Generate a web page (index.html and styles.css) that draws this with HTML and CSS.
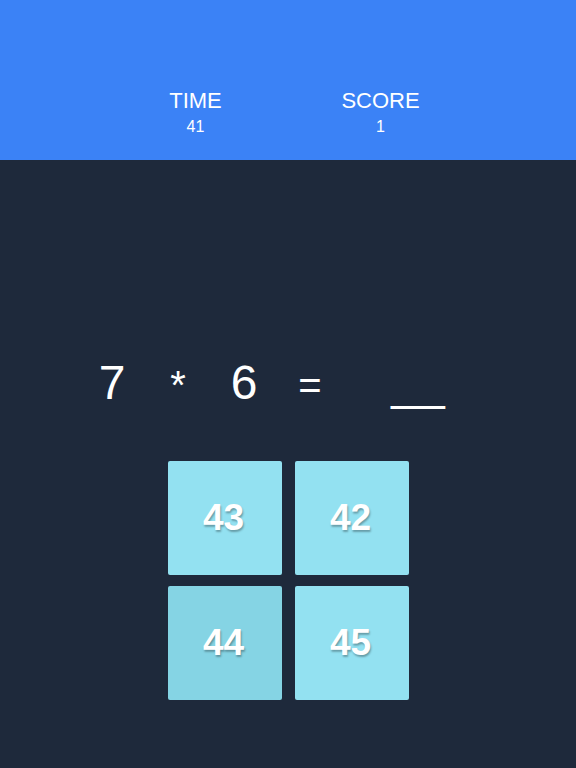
FILE: index.html
```html
<!DOCTYPE html>
<html lang="en">
<head>
    <meta charset="UTF-8">
    <meta name="viewport" content="width=device-width, initial-scale=1.0">
    <title>Math Sprint</title>
    <link rel="stylesheet" href="styles.css">
</head>
<body>
    <header class="scoreboard">
        <div class="stat">
            <div class="stat-label">TIME</div>
            <div class="stat-value">41</div>
        </div>
        <div class="stat">
            <div class="stat-label">SCORE</div>
            <div class="stat-value">1</div>
        </div>
    </header>

    <main class="game">
        <div class="question">
            <span class="term">7</span>
            <span class="term op">*</span>
            <span class="term">6</span>
            <span class="term op">=</span>
            <span class="term blank">__</span>
        </div>
        <div class="answers">
            <button class="answer">43</button>
            <button class="answer">42</button>
            <button class="answer hover">44</button>
            <button class="answer">45</button>
        </div>
    </main>
</body>
</html>
```

FILE: styles.css
```css
html, body {
    height: 100%;
}
body {
    margin: 0;
    font-family: "Liberation Sans", Arial, sans-serif;
    background-color: #1e293b;
    color: white;
}
.scoreboard {
    height: 160px;
    background-color: #3b82f6;
    display: flex;
    justify-content: center;
    align-items: flex-start;
    gap: 60px;
    padding-top: 88px;
    box-sizing: border-box;
}
.stat {
    width: 125px;
    text-align: center;
}
.stat-label {
    font-size: 22px;
    line-height: 26px;
}
.stat-value {
    font-size: 16px;
    line-height: 22px;
    margin-top: 2px;
}
.game {
    display: flex;
    flex-direction: column;
    align-items: center;
}
.question {
    display: flex;
    align-items: baseline;
    margin-top: 195px;
    margin-left: -51px;
    font-size: 48px;
    line-height: 56px;
}
.term {
    width: 66px;
    text-align: center;
}
.term.op {
    font-size: 40px;
}
.term.blank {
    width: 56px;
    margin-left: 47px;
    font-size: 48px;
}
.answers {
    display: grid;
    grid-template-columns: repeat(2, 114px);
    grid-auto-rows: 114px;
    gap: 11px 13px;
    margin-top: 48px;
}
.answer {
    border: none;
    border-radius: 2px;
    background-color: #93e1f1;
    color: white;
    font-family: "Liberation Sans", Arial, sans-serif;
    font-size: 37px;
    font-weight: bold;
    text-shadow: 1px 2px 2px rgba(0, 0, 0, 0.3);
    padding: 0 2px 0 0;
    cursor: pointer;
}
.answer.hover,
.answer:hover {
    background-color: #85d4e4;
}
```
